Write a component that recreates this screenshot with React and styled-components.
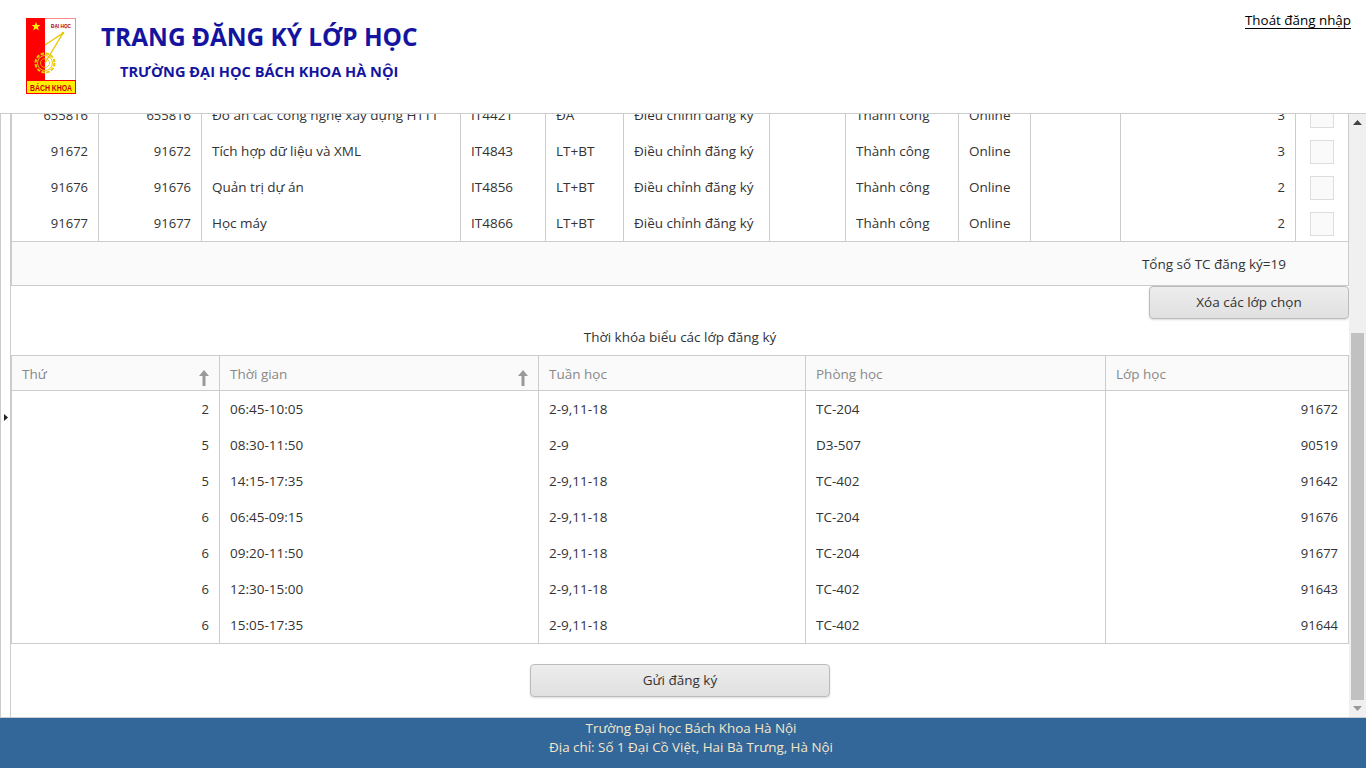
import React from 'react';
import styled, { createGlobalStyle } from 'styled-components';

const GlobalStyle = createGlobalStyle`
  html, body {
    margin: 0;
    padding: 0;
    height: 100%;
    overflow: hidden;
    background: #fff;
  }
  * {
    box-sizing: border-box;
  }
`;

const Page = styled.div`
  display: flex;
  flex-direction: column;
  width: 1366px;
  height: 768px;
  font-family: 'Open Sans', 'Noto Sans', sans-serif;
  font-size: 13.5px;
  color: #333;
`;

const Header = styled.header`
  display: flex;
  height: 114px;
  flex-shrink: 0;
  padding: 18px 15px 0 26px;
  border-bottom: 1px solid #ccc;
`;

const TitleBlock = styled.div`
  display: flex;
  flex-direction: column;
  flex: 1;
  margin-left: 25px;
  color: #1414a0;
  font-weight: 700;
`;

const Title = styled.h1`
  margin: 0;
  font-size: 24.4px;
  line-height: 38px;
`;

const Subtitle = styled.h2`
  margin: 5px 0 0 19px;
  font-size: 14.6px;
  line-height: 20px;
`;

const Logout = styled.a`
  color: #000;
  font-size: 13.4px;
  line-height: 20px;
  margin-top: -8px;
  text-decoration: underline;
  text-underline-offset: 3px;
`;

const Middle = styled.div`
  display: flex;
  flex: 1;
  min-height: 0;
`;

const LeftRail = styled.div`
  display: flex;
  align-items: center;
  justify-content: center;
  width: 11px;
  padding-top: 4px;
  border-left: 1px solid #ccc;
  border-right: 1px solid #ccc;
`;

const Content = styled.main`
  flex: 1;
  min-width: 0;
  overflow: hidden;
`;

const GridTable = styled.div`
  display: grid;
  grid-template-columns: ${(props) => props.$columns};
  border-left: 1px solid #ccc;
  border-right: 1px solid #ccc;
  border-top: ${(props) => (props.$noTop ? 'none' : '1px solid #ccc')};
  border-bottom: 1px solid #ccc;
  margin-top: ${(props) => props.$offset || 0}px;
`;

const Cell = styled.div`
  height: 36px;
  line-height: 36px;
  padding: 0 10px;
  white-space: nowrap;
  overflow: hidden;
  font-size: ${(props) => (props.$right ? '13px' : 'inherit')};
  text-align: ${(props) => (props.$right ? 'right' : 'left')};
  border-right: ${(props) => (props.$last ? 'none' : '1px solid #ccc')};
`;

const CheckCell = styled(Cell)`
  display: flex;
  align-items: center;
  justify-content: center;
  padding: 2px 0 0;
`;

const CheckBox = styled.span`
  display: block;
  width: 24px;
  height: 24px;
  background: #fafafa;
  border: 1px solid #ddd;
`;

const HeadCell = styled.div`
  position: relative;
  height: 35px;
  line-height: 36px;
  padding: 0 10px;
  color: #888;
  background: #fafafa;
  border-right: ${(props) => (props.$last ? 'none' : '1px solid #ccc')};
  border-bottom: 1px solid #ccc;
`;

const SortIcon = styled.svg`
  position: absolute;
  right: 9px;
  top: 14px;
`;

const Summary = styled.div`
  height: 44px;
  line-height: 44px;
  padding-right: 62px;
  text-align: right;
  background: #fafafa;
  border: 1px solid #ccc;
  border-top: none;
`;

const ButtonRow = styled.div`
  display: flex;
  justify-content: ${(props) => props.$align || 'flex-end'};
  padding-top: ${(props) => props.$top || 0}px;
`;

const Button = styled.button`
  width: ${(props) => props.$width}px;
  height: 33px;
  padding: 0 0 2px;
  font: inherit;
  color: #333;
  background: linear-gradient(#ededed, #e0e0e0);
  border: 1px solid #bbb;
  border-radius: 4px;
  box-shadow: 0 1px 2px rgba(0, 0, 0, 0.15);
`;

const Caption = styled.div`
  height: 36px;
  line-height: 36px;
  text-align: center;
`;

const ScrollBar = styled.div`
  display: flex;
  flex-direction: column;
  width: 17px;
  background: #f0f0f0;
`;

const ScrollArrow = styled.div`
  display: flex;
  align-items: center;
  justify-content: center;
  height: 17px;
  flex-shrink: 0;
`;

const ScrollSpace = styled.div`
  flex: 1;
  padding: ${(props) => props.$top}px 2px 0;
`;

const ScrollThumb = styled.div`
  height: 100%;
  background: #c1c1c1;
`;

const Footer = styled.footer`
  height: 51px;
  flex-shrink: 0;
  padding: 1px 0 0 16px;
  text-align: center;
  font-size: 13.4px;
  line-height: 19px;
  color: #f5e6c8;
  background: #336699;
  border-top: 1px solid #ccc;
`;

const Logo = () => (
  <svg width="50" height="76" viewBox="0 0 50 76">
    <rect x="0.5" y="0.5" width="49" height="75" fill="#fff" stroke="#f88" />
    <rect x="0" y="0" width="19" height="62" fill="#f00" />
    <rect x="0.5" y="62.5" width="49" height="13" fill="#fe0" stroke="#f00" />
    <polygon points="10,4 11.2,7 14.4,7 11.9,9.1 12.8,12.400 10,10.400 7.200,12.400 8.100,9.100 5.600,7 8.800,7" fill="#fe0" />
    <text x="35" y="9.500" fontSize="5.500" fontWeight="700" textAnchor="middle" textLength="20" lengthAdjust="spacingAndGlyphs" fill="#a00" fontFamily="Liberation Sans">ĐẠI HỌC</text>
    <circle cx="19" cy="45" r="9.500" fill="none" stroke="#e8c800" strokeWidth="2" strokeDasharray="3.500 1.500" />
    <circle cx="19" cy="45" r="7.500" fill="none" stroke="#e8c800" strokeWidth="1" />
    <circle cx="19" cy="45" r="4.500" fill="none" stroke="#e8c800" strokeWidth="0.800" />
    <path d="M19 27 L37 15 L19 45" fill="none" stroke="#e8c800" strokeWidth="1.400" />
    <circle cx="37" cy="15" r="1.300" fill="#e8c800" />
    <text x="25" y="72.500" fontSize="9.500" fontWeight="700" textAnchor="middle" textLength="42" lengthAdjust="spacingAndGlyphs" fill="#c00" fontFamily="Liberation Sans">BÁCH KHOA</text>
  </svg>
);

const SortArrow = () => (
  <SortIcon width="12" height="16" viewBox="0 0 12 16">
    <path d="M6 0 L11 6 H7.500 V16 H4.500 V6 H1 Z" fill="#999" />
  </SortIcon>
);

const classColumns = '87px 103px 259px 85px 78px 146px 76px 113px 72px 90px 175px 1fr';

const classRows = [
  ['655816', '655816', 'Đồ án các công nghệ xây dựng HTTT', 'IT4421', 'ĐA', 'Điều chỉnh đăng ký', '', 'Thành công', 'Online', '', '3'],
  ['91672', '91672', 'Tích hợp dữ liệu và XML', 'IT4843', 'LT+BT', 'Điều chỉnh đăng ký', '', 'Thành công', 'Online', '', '3'],
  ['91676', '91676', 'Quản trị dự án', 'IT4856', 'LT+BT', 'Điều chỉnh đăng ký', '', 'Thành công', 'Online', '', '2'],
  ['91677', '91677', 'Học máy', 'IT4866', 'LT+BT', 'Điều chỉnh đăng ký', '', 'Thành công', 'Online', '', '2'],
];

const rightColumns = [0, 1, 10];

const timeColumns = '208px 319px 267px 300px 1fr';

const timeRows = [
  ['2', '06:45-10:05', '2-9,11-18', 'TC-204', '91672'],
  ['5', '08:30-11:50', '2-9', 'D3-507', '90519'],
  ['5', '14:15-17:35', '2-9,11-18', 'TC-402', '91642'],
  ['6', '06:45-09:15', '2-9,11-18', 'TC-204', '91676'],
  ['6', '09:20-11:50', '2-9,11-18', 'TC-204', '91677'],
  ['6', '12:30-15:00', '2-9,11-18', 'TC-402', '91643'],
  ['6', '15:05-17:35', '2-9,11-18', 'TC-402', '91644'],
];

const App = () => {
  return (
    <Page>
      <GlobalStyle />
      <Header>
        <Logo />
        <TitleBlock>
          <Title>TRANG ĐĂNG KÝ LỚP HỌC</Title>
          <Subtitle>TRƯỜNG ĐẠI HỌC BÁCH KHOA HÀ NỘI</Subtitle>
        </TitleBlock>
        <Logout href="#">Thoát đăng nhập</Logout>
      </Header>
      <Middle>
        <LeftRail>
          <svg width="4" height="7" viewBox="0 0 4 7">
            <path d="M0 0 L4 3.500 L0 7 Z" fill="#222" />
          </svg>
        </LeftRail>
        <Content>
          <GridTable $columns={classColumns} $noTop $offset={-17}>
            {classRows.map((row, i) => (
              <React.Fragment key={i}>
                {row.map((text, c) => (
                  <Cell key={c} $right={rightColumns.includes(c)}>{text}</Cell>
                ))}
                <CheckCell $last><CheckBox /></CheckCell>
              </React.Fragment>
            ))}
          </GridTable>
          <Summary>Tổng số TC đăng ký=19</Summary>
          <ButtonRow>
            <Button $width={200}>Xóa các lớp chọn</Button>
          </ButtonRow>
          <Caption>Thời khóa biểu các lớp đăng ký</Caption>
          <GridTable $columns={timeColumns}>
            <HeadCell>Thứ<SortArrow /></HeadCell>
            <HeadCell>Thời gian<SortArrow /></HeadCell>
            <HeadCell>Tuần học</HeadCell>
            <HeadCell>Phòng học</HeadCell>
            <HeadCell $last>Lớp học</HeadCell>
            {timeRows.map((row, i) => (
              <React.Fragment key={i}>
                <Cell $right>{row[0]}</Cell>
                <Cell>{row[1]}</Cell>
                <Cell>{row[2]}</Cell>
                <Cell>{row[3]}</Cell>
                <Cell $right $last>{row[4]}</Cell>
              </React.Fragment>
            ))}
          </GridTable>
          <ButtonRow $align="center" $top={20}>
            <Button $width={300}>Gửi đăng ký</Button>
          </ButtonRow>
        </Content>
        <ScrollBar>
          <ScrollArrow>
            <svg width="9" height="5" viewBox="0 0 9 5"><path d="M4.500 0 L9 5 H0 Z" fill="#444" /></svg>
          </ScrollArrow>
          <ScrollSpace $top={202}><ScrollThumb /></ScrollSpace>
          <ScrollArrow>
            <svg width="9" height="5" viewBox="0 0 9 5"><path d="M0 0 H9 L4.500 5 Z" fill="#999" /></svg>
          </ScrollArrow>
        </ScrollBar>
      </Middle>
      <Footer>
        <div>Trường Đại học Bách Khoa Hà Nội</div>
        <div>Địa chỉ: Số 1 Đại Cồ Việt, Hai Bà Trưng, Hà Nội</div>
      </Footer>
    </Page>
  );
};

export default App;
